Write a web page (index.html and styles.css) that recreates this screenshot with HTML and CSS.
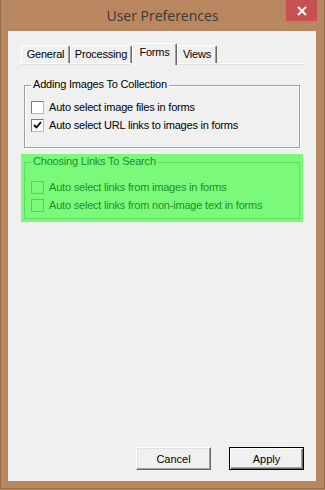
FILE: index.html
```html
<!DOCTYPE html>
<html lang="en">
<head>
    <meta charset="UTF-8">
    <title>User Preferences</title>
    <link rel="stylesheet" href="styles.css">
</head>
<body>
    <div class="window">
        <div class="titlebar">
            <span></span>
            <div class="title">User Preferences</div>
            <div class="close">
                <svg width="10" height="10" viewBox="0 0 10 10">
                    <path d="M1 1 L9 9 M9 1 L1 9" stroke="#fff" stroke-width="2"/>
                </svg>
            </div>
        </div>

        <div class="client">
            <div class="tabs">
                <div class="tab tab-general">General</div>
                <div class="tab tab-processing">Processing</div>
                <div class="tab tab-forms selected">Forms</div>
                <div class="tab tab-views">Views</div>
            </div>

            <div class="panel">
                <div class="group">
                    <div class="group-title">Adding Images To Collection</div>
                    <div class="check-row">
                        <span class="checkbox"></span>
                        <span>Auto select image files in forms</span>
                    </div>
                    <div class="check-row">
                        <span class="checkbox">
                            <svg width="11" height="11" viewBox="0 0 11 11">
                                <path d="M2 5 L4.5 7.5 L9 2" fill="none" stroke="#000" stroke-width="1.8"/>
                            </svg>
                        </span>
                        <span>Auto select URL links to images in forms</span>
                    </div>
                </div>

                <div class="highlight">
                    <div class="group group-green">
                        <div class="group-title">Choosing Links To Search</div>
                        <div class="check-row">
                            <span class="checkbox"></span>
                            <span>Auto select links from images in forms</span>
                        </div>
                        <div class="check-row">
                            <span class="checkbox"></span>
                            <span>Auto select links from non-image text in forms</span>
                        </div>
                    </div>
                </div>
            </div>

            <div class="buttons">
                <button class="btn">Cancel</button>
                <button class="btn btn-default">Apply</button>
            </div>
        </div>
    </div>
</body>
</html>
```

FILE: styles.css
```css
* {
    box-sizing: border-box;
}

body {
    margin: 0;
    background-color: #b8865f;
    font-family: 'Liberation Sans', Arial, sans-serif;
    font-size: 11px;
    letter-spacing: -0.2px;
    color: #000;
}

.window {
    width: 325px;
    height: 489px;
    background-color: #b8865f;
    border-left: 1px solid #946a4b;
    border-right: 1px solid #946a4b;
    border-bottom: 1px solid #946a4b;
    display: flex;
    flex-direction: column;
}

/* title bar */

.titlebar {
    height: 31px;
    display: grid;
    grid-template-columns: 1fr auto 1fr;
}

.title {
    font-family: 'Open Sans', sans-serif;
    font-size: 14px;
    letter-spacing: 0;
    line-height: 31px;
    color: #3a3a3a;
}

.close {
    justify-self: end;
    align-self: start;
    width: 31px;
    height: 21px;
    margin-right: 7px;
    background-color: #c75050;
    display: flex;
    align-items: center;
    justify-content: center;
}

/* client area */

.client {
    margin-left: 7px;
    width: 308px;
    height: 450px;
    background-color: #f0f0f0;
    display: flex;
    flex-direction: column;
}

.tabs {
    display: flex;
    align-items: flex-end;
    height: 20px;
    margin-top: 12px;
    margin-left: 13px;
}

.tab {
    height: 18px;
    line-height: 17px;
    text-align: center;
    background-color: #f0f0f0;
    border-top: 1px solid #fff;
    border-left: 1px solid #fff;
    border-right: 1px solid #696969;
    box-shadow: inset -1px 0 #a0a0a0;
    border-radius: 2px 2px 0 0;
}

.tab-general { width: 49px; }
.tab-processing { width: 62px; }
.tab-forms { width: 45px; }
.tab-views { width: 40px; }

.tab.selected {
    height: 22px;
    margin-bottom: -2px;
    line-height: 14px;
    padding-top: 1px;
    z-index: 1;
}

.panel {
    margin-left: 12px;
    width: 284px;
    border-top: 1px solid #fff;
    box-shadow: inset 0 1px #e3e3e3;
    padding-top: 1px;
    padding-left: 4px;
}

/* group boxes */

.group {
    margin-top: 20px;
    width: 276px;
    border: 1px solid #a0a0a0;
    box-shadow: 1px 1px 0 #fff, inset 1px 1px 0 #fff;
    padding-bottom: 13px;
}

.group-title {
    width: fit-content;
    margin-top: -8px;
    margin-left: 6px;
    margin-bottom: 7px;
    padding: 0 2px;
    line-height: 13px;
    background-color: #f0f0f0;
}

.check-row {
    display: flex;
    align-items: center;
    height: 18px;
    padding-left: 6px;
}

.checkbox {
    width: 13px;
    height: 13px;
    margin-right: 5px;
    background-color: #fff;
    border: 1px solid #7a7a7a;
    border-right-color: #b8b8b8;
    border-bottom-color: #b8b8b8;
    display: flex;
    align-items: center;
    justify-content: center;
}

.highlight {
    margin-top: 6px;
    margin-left: -3px;
    width: 282px;
    padding: 8px 3px 3px 3px;
    background-color: #7af97a;
}

.group-green {
    margin-top: 0;
    border-color: #5ede5e;
    box-shadow: none;
    padding-bottom: 4px;
    color: #21902a;
}

.group-green .group-title {
    background-color: #7af97a;
    margin-bottom: 10px;
}

.group-green .checkbox {
    background-color: #7af97a;
    border-color: #5ccc5c;
}

/* buttons */

.buttons {
    margin-top: auto;
    margin-bottom: 11px;
    padding-right: 12px;
    display: flex;
    justify-content: flex-end;
    gap: 18px;
}

.btn {
    width: 75px;
    height: 23px;
    padding: 0;
    font-family: 'Liberation Sans', Arial, sans-serif;
    font-size: 11px;
    color: #000;
    background-color: #f0f0f0;
    border: 1px solid;
    border-color: #fff #696969 #696969 #fff;
    box-shadow: inset -1px -1px #a0a0a0, inset 1px 1px #e3e3e3;
}

.btn-default {
    border: 1px solid #000;
    box-shadow: inset 1px 1px #fff, inset -1px -1px #696969, inset -2px -2px #a0a0a0;
}
```
